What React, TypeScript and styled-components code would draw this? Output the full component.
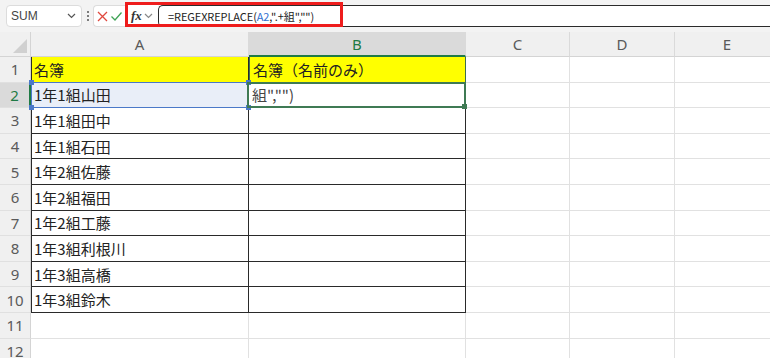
import React from "react";
import styled, { createGlobalStyle, css } from "styled-components";

const GlobalStyle = createGlobalStyle`
  html, body { margin: 0; padding: 0; background: #ffffff; }
  body { font-family: "Noto Sans CJK JP", "Noto Sans", sans-serif; overflow: hidden; }
  * { box-sizing: border-box; }
`;

const Page = styled.div`
  width: 770px;
  height: 358px;
  overflow: hidden;
  display: flex;
  flex-direction: column;
`;

const Toolbar = styled.div`
  flex: 0 0 32px;
  height: 32px;
  background: #f3f3f3;
  display: flex;
  align-items: flex-start;
  padding-top: 5px;
  padding-left: 6px;
`;

const NameBox = styled.div`
  width: 76px;
  height: 22px;
  background: #fff;
  border: 1px solid #dcdcdc;
  border-radius: 4px;
  display: flex;
  align-items: center;
  justify-content: space-between;
  padding: 0 5px 0 4px;
  font-family: "Liberation Sans", Arial, sans-serif;
  font-size: 12px;
  color: #444;
`;

const Dots = styled.div`
  width: 11px;
  height: 22px;
  display: flex;
  flex-direction: column;
  align-items: center;
  justify-content: center;
  gap: 2px;
  span { width: 2px; height: 2px; background: #555; border-radius: 1px; }
`;

const ActionBox = styled.div`
  width: 32px;
  height: 22px;
  background: #fff;
  border: 1px solid #dcdcdc;
  border-right: none;
  border-radius: 4px 0 0 4px;
  display: flex;
  align-items: center;
  justify-content: space-around;
  padding: 0 1px;
`;

const FormulaArea = styled.div`
  flex: 1;
  display: flex;
  position: relative;
  height: 22px;
`;

const RedFrame = styled.div`
  position: absolute;
  left: 0;
  top: -3px;
  width: 218px;
  height: 25px;
  border: 3px solid #ee1c1c;
  pointer-events: none;
  z-index: 2;
`;

const FxButton = styled.div`
  width: 33px;
  height: 22px;
  display: flex;
  align-items: center;
  padding-left: 6px;
  gap: 2px;
  background: #fff;
  font-family: "Liberation Serif", serif;
  font-style: italic;
  font-weight: 700;
  font-size: 13px;
  color: #333;
`;

const FormulaInput = styled.div`
  flex: 1;
  height: 22px;
  border: 1.5px solid #2b2b2b;
  border-right: none;
  border-radius: 5px 0 0 5px;
  padding-left: 9px;
  background: #fff;
  display: flex;
  align-items: center;
  font-family: "Noto Sans CJK JP", sans-serif;
  font-size: 11px;
  letter-spacing: -0.1px;
  color: #222;
  white-space: pre;
`;

const Ref = styled.span`
  color: #2f6fcf;
`;

const Grid = styled.div`
  flex: 0 0 auto;
  display: grid;
  grid-template-columns: 31px 218px 217px 104px 105px 105px;
  grid-template-rows: 25px repeat(12, 25.6px);
`;

const Corner = styled.div`
  background: #f0f0f0;
  border-right: 1px solid #d4d4d4;
  border-bottom: 1px solid #d4d4d4;
  position: relative;
  &::after {
    content: "";
    position: absolute;
    right: 3px;
    bottom: 3px;
    border-style: solid;
    border-width: 0 0 14px 14px;
    border-color: transparent transparent #d0d0d0 transparent;
  }
`;

const ColHead = styled.div<{ $active?: boolean }>`
  background: ${(p) => (p.$active ? "#dadada" : "#f0f0f0")};
  border-right: 1px solid #dadada;
  border-bottom: ${(p) => (p.$active ? "2px solid #1f7a45" : "1px solid #d4d4d4")};
  display: flex;
  align-items: center;
  justify-content: center;
  font-family: "Noto Sans", sans-serif;
  font-size: 15px;
  color: ${(p) => (p.$active ? "#1f7a45" : "#5a5a5a")};
`;

const RowHead = styled.div<{ $active?: boolean }>`
  background: ${(p) => (p.$active ? "#dadada" : "#f0f0f0")};
  border-right: ${(p) => (p.$active ? "2px solid #1f7a45" : "1px solid #d4d4d4")};
  border-bottom: 1px solid #e0e0e0;
  display: flex;
  align-items: center;
  justify-content: center;
  font-family: "Noto Sans", sans-serif;
  font-size: 15px;
  color: ${(p) => (p.$active ? "#1f7a45" : "#5a5a5a")};
`;

const Cell = styled.div<{
  $boxed?: boolean;
  $first?: boolean;
  $fill?: string;
  $green?: boolean;
}>`
  position: relative;
  background: ${(p) => p.$fill || "#ffffff"};
  border-right: 1px solid #e1e1e1;
  border-bottom: 1px solid #e1e1e1;
  display: flex;
  align-items: center;
  padding-left: 3px;
  font-size: 15px;
  color: #222;
  white-space: nowrap;
  ${(p) =>
    p.$boxed &&
    css`
      border-right-color: #2a2a2a;
      border-bottom-color: #2a2a2a;
    `}
  ${(p) =>
    p.$first &&
    css`
      border-left: 1px solid #2a2a2a;
      padding-left: 2px;
    `}
  ${(p) =>
    p.$green &&
    css`
      border-right-color: #3d6e4d;
      border-bottom-color: #3d6e4d;
      border-left: 1px solid #3d6e4d;
    `}
`;

const EditText = styled.span`
  color: #444;
`;

const RefBox = styled.div`
  position: absolute;
  left: -1px;
  top: -1px;
  right: -1px;
  bottom: -1px;
  border: 1px solid #4a78c8;
  pointer-events: none;
  z-index: 2;
`;

const Handle = styled.span<{ $x: "l" | "r"; $y: "t" | "b"; $c: string }>`
  position: absolute;
  width: 5px;
  height: 5px;
  background: ${(p) => p.$c};
  ${(p) => (p.$x === "l" ? "left: -3px;" : "right: -3px;")}
  ${(p) => (p.$y === "t" ? "top: -3px;" : "bottom: -3px;")}
`;

const ActiveBox = styled.div`
  position: absolute;
  left: -2px;
  top: -1px;
  right: -1px;
  bottom: -1px;
  border: 2px solid #3f7a54;
  pointer-events: none;
  z-index: 3;
`;

const XIcon = () => (
  <svg width="11" height="11" viewBox="0 0 11 11">
    <path d="M1 1 L10 10 M10 1 L1 10" stroke="#e0483e" strokeWidth="1.3" fill="none" />
  </svg>
);

const CheckIcon = () => (
  <svg width="11" height="11" viewBox="0 0 11 11">
    <path d="M0.5 5.5 L4 9 L10.5 1.5" stroke="#3fa356" strokeWidth="1.3" fill="none" />
  </svg>
);

const Chevron = ({ color = "#555" }: { color?: string }) => (
  <svg width="9" height="6" viewBox="0 0 9 6">
    <path d="M1 1 L4.5 4.5 L8 1" stroke={color} strokeWidth="1.2" fill="none" />
  </svg>
);

const names = [
  "名簿",
  "1年1組山田",
  "1年1組田中",
  "1年1組石田",
  "1年2組佐藤",
  "1年2組福田",
  "1年2組工藤",
  "1年3組利根川",
  "1年3組高橋",
  "1年3組鈴木",
];

const cols = ["A", "B", "C", "D", "E"];

export default function App() {
  const rows = Array.from({ length: 12 }, (_, i) => i + 1);
  return (
    <Page>
      <GlobalStyle />
      <Toolbar>
        <NameBox>
          <span>SUM</span>
          <Chevron />
        </NameBox>
        <Dots>
          <span />
          <span />
          <span />
        </Dots>
        <ActionBox>
          <XIcon />
          <CheckIcon />
        </ActionBox>
        <FormulaArea>
          <FxButton>
            <span>fx</span>
            <Chevron color="#888" />
          </FxButton>
          <FormulaInput>
            {"=REGEXREPLACE("}
            <Ref>A2</Ref>
            {',".+組","")'}
          </FormulaInput>
          <RedFrame />
        </FormulaArea>
      </Toolbar>
      <Grid>
        <Corner />
        {cols.map((c) => (
          <ColHead key={c} $active={c === "B"}>
            {c}
          </ColHead>
        ))}
        {rows.map((r) => (
          <React.Fragment key={r}>
            <RowHead $active={r === 2}>{r}</RowHead>
            <Cell
              $boxed={r <= 10}
              $first={r <= 10}
              $fill={r === 1 ? "#ffff00" : r === 2 ? "#e9eef8" : undefined}
            >
              {r <= 10 ? names[r - 1] : ""}
              {r === 2 && (
                <RefBox>
                  <Handle $x="l" $y="t" $c="#4a78c8" />
                  <Handle $x="r" $y="t" $c="#4a78c8" />
                  <Handle $x="l" $y="b" $c="#4a78c8" />
                  <Handle $x="r" $y="b" $c="#4a78c8" />
                </RefBox>
              )}
            </Cell>
            <Cell $boxed={r <= 10} $green={r === 1} $fill={r === 1 ? "#ffff00" : undefined}>
              {r === 1 && "名簿（名前のみ）"}
              {r === 2 && <EditText>組","")</EditText>}
              {r === 2 && (
                <ActiveBox>
                  <Handle $x="r" $y="b" $c="#3f7a54" />
                </ActiveBox>
              )}
            </Cell>
            <Cell />
            <Cell />
            <Cell />
          </React.Fragment>
        ))}
      </Grid>
    </Page>
  );
}
